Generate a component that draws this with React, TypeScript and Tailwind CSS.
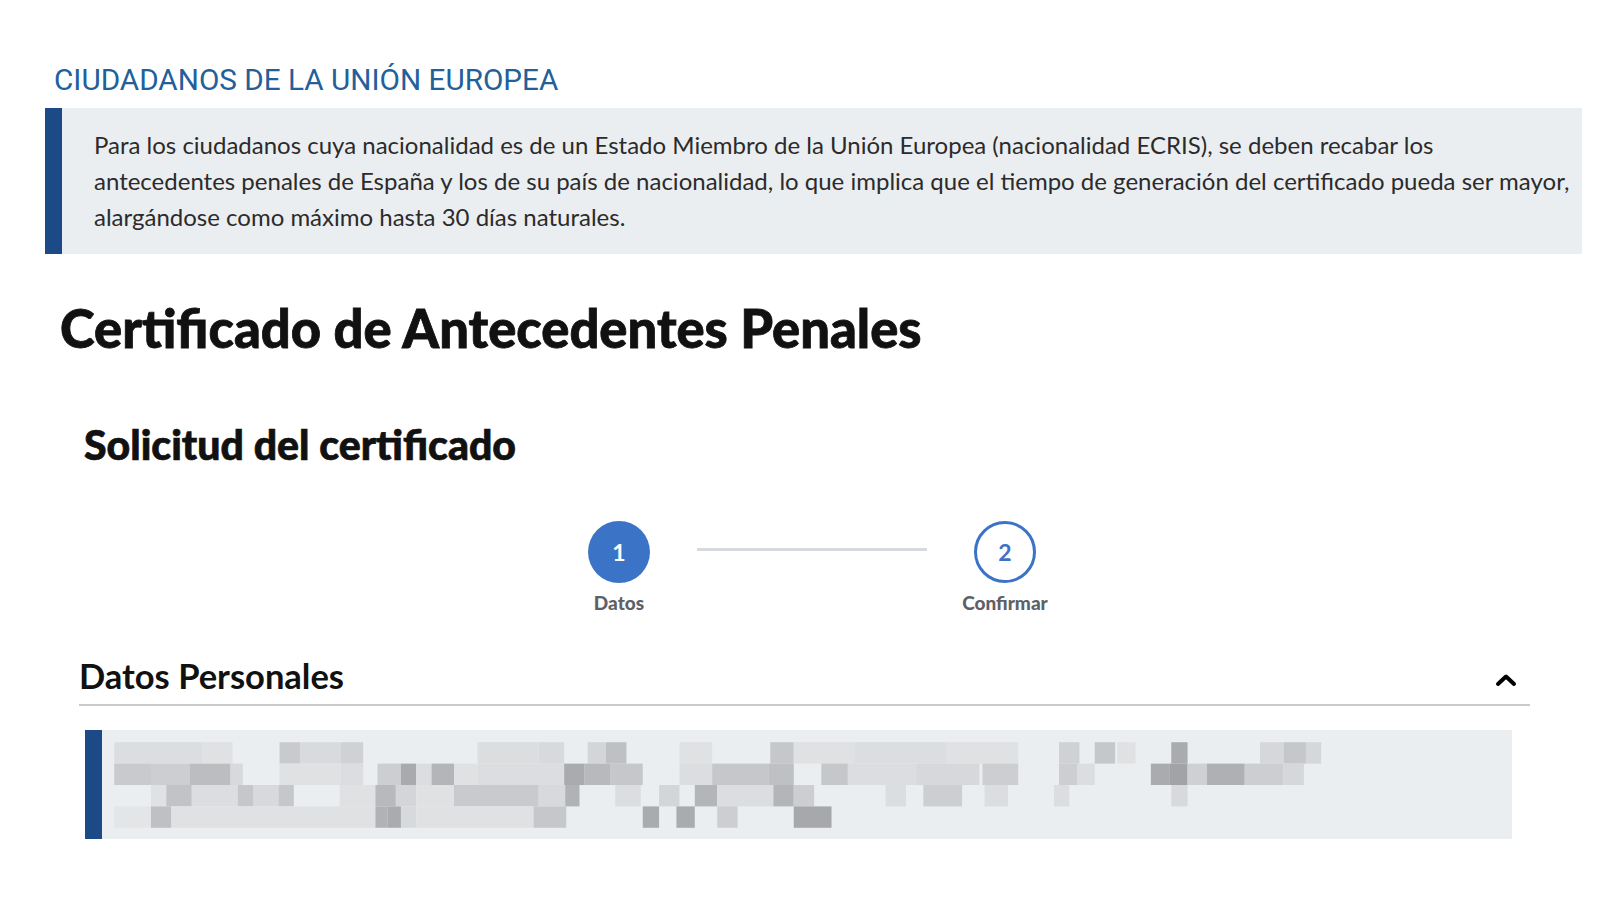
import React from "react";

// x, y, w, h, colour
type Cell = [number, number, number, number, string];

const bands = [
    [727, 748],
    [748, 769],
    [769, 790],
    [790, 811],
];

const rows: [number, number, string][][] = [
    [
        [114, 200, "#dcdde0"], [200, 230, "#e0e1e3"], [276, 296, "#c9cacd"], [296, 336, "#d9dadd"],
        [336, 358, "#d0d1d4"], [470, 530, "#dcdddf"], [530, 555, "#d8d9dc"], [578, 596, "#d4d5d8"],
        [596, 616, "#bfc0c3"], [668, 700, "#e0e1e3"], [757, 780, "#c6c7ca"], [780, 840, "#e0e1e3"],
        [840, 930, "#dcdde0"], [930, 1000, "#e0e1e3"], [1040, 1060, "#d0d1d4"], [1075, 1095, "#c6c7ca"],
        [1097, 1115, "#e0e1e3"], [1150, 1166, "#a9abae"], [1237, 1260, "#d6d7da"], [1260, 1282, "#c6c7ca"],
        [1282, 1297, "#d6d7da"],
    ],
    [
        [114, 150, "#c9cacd"], [150, 188, "#cdced1"], [188, 228, "#bcbdc0"], [228, 240, "#d8d9dc"],
        [276, 336, "#e0e1e3"], [336, 358, "#dcdde0"], [372, 395, "#cdced1"], [395, 410, "#a8aaad"],
        [410, 425, "#dcdde0"], [425, 447, "#b4b5b8"], [447, 470, "#e0e1e3"], [470, 555, "#dcdde0"],
        [555, 575, "#a9abae"], [575, 600, "#b8b9bc"], [600, 632, "#c6c7ca"], [668, 700, "#dcdde0"],
        [700, 755, "#c6c7ca"], [755, 780, "#bfc0c3"], [807, 833, "#c6c7ca"], [833, 900, "#dcdde0"],
        [900, 962, "#d7d8db"], [965, 1000, "#cdced1"], [1040, 1058, "#cdced1"], [1058, 1075, "#dcdde0"],
        [1130, 1148, "#a9abae"], [1148, 1166, "#a1a3a6"], [1166, 1185, "#cfd0d3"], [1185, 1222, "#aeb0b3"],
        [1222, 1260, "#cdced1"], [1260, 1280, "#d6d7da"],
    ],
    [
        [150, 165, "#e0e1e3"], [165, 190, "#c2c3c6"], [190, 235, "#dcdde0"], [235, 250, "#c6c7ca"],
        [250, 275, "#d8d9dc"], [275, 290, "#c6c7ca"], [335, 370, "#e0e1e3"], [370, 390, "#b8b9bc"],
        [390, 410, "#d4d5d8"], [410, 447, "#e0e1e3"], [447, 530, "#c9cacd"], [530, 556, "#d8d9dc"],
        [556, 570, "#b0b2b5"], [605, 630, "#dcdde0"], [648, 668, "#d4d5d8"], [683, 705, "#b4b5b8"],
        [705, 760, "#dcdde0"], [760, 780, "#b4b5b8"], [780, 800, "#cdced1"], [870, 890, "#dcdde0"],
        [907, 945, "#cdced1"], [967, 990, "#dcdde0"], [1035, 1050, "#dcdde0"], [1150, 1166, "#d8d9dc"],
    ],
    [
        [114, 150, "#e4e5e7"], [150, 170, "#bfc0c3"], [170, 370, "#e0e1e3"], [370, 382, "#b0b2b5"],
        [382, 395, "#a9abae"], [395, 410, "#d8d9dc"], [410, 525, "#e0e1e3"], [525, 557, "#c6c7ca"],
        [632, 648, "#a9abae"], [665, 683, "#a9abae"], [705, 725, "#cdced1"], [780, 817, "#a6a8ab"],
    ],
];

const cells: Cell[] = rows.flatMap((row, i) =>
    row.map(([x1, x2, c]) => [x1 - 102, bands[i][0] - 715, x2 - x1, bands[i][1] - bands[i][0], c] as Cell)
);

// Bloque pixelado (datos ocultos)
const Mosaic = () => (
    <svg width="1408" height="109" viewBox="0 0 1380 107" preserveAspectRatio="none" className="block">
        {cells.map(([x, y, w, h, c], i) => (
            <rect key={i} x={x} y={y} width={w} height={h} fill={c} />
        ))}
    </svg>
);

const Step = ({ n, label, active }: { n: number; label: string; active?: boolean }) => (
    <div className="flex w-[156px] flex-col items-center">
        <div
            className={
                active
                    ? "flex h-[62px] w-[62px] items-center justify-center rounded-full bg-[#3b74c6] text-[23px] font-bold text-white"
                    : "flex h-[62px] w-[62px] items-center justify-center rounded-full border-[3px] border-[#3b74c6] bg-white text-[23px] font-bold text-[#3b74c6]"
            }
        >
            {n}
        </div>
        <span className="mt-[8px] text-[19px] font-black leading-[24px] text-[#5d6167]">{label}</span>
    </div>
);

export default function App() {
    return (
        <div className="min-h-[901px] w-[1600px] bg-white font-['Lato','Noto_Sans',sans-serif] text-[#222]">
            {/* Aviso UE */}
            <div className="pt-[62px] pl-[45px] pr-[18px]">
                <h3 className="pl-[9px] font-['Roboto',sans-serif] text-[29.7px] leading-[35px] text-[#23609a]">
                    CIUDADANOS DE LA UNIÓN EUROPEA
                </h3>
                <div className="mt-[11px] flex bg-[#ebeef1]">
                    <div className="w-[17px] shrink-0 bg-[#1b4a86]" />
                    <p className="py-[19px] pl-[32px] pr-[10px] text-[24px] leading-[36px] text-[#2b2b2b]">
                        Para los ciudadanos cuya nacionalidad es de un Estado Miembro de la Unión Europea (nacionalidad ECRIS), se deben recabar los antecedentes penales de España y los de su país de nacionalidad, lo que implica que el tiempo de generación del certificado pueda ser mayor, alargándose como máximo hasta 30 días naturales.
                    </p>
                </div>
            </div>

            <h1 className="mt-[43px] pl-[60px] text-[52.5px] font-black leading-[62px] text-[#111] [-webkit-text-stroke:0.8px_#111]">
                Certificado de Antecedentes Penales
            </h1>

            <h2 className="mt-[62px] pl-[84px] text-[41px] font-black leading-[48px] text-[#111] [-webkit-text-stroke:0.7px_#111]">
                Solicitud del certificado
            </h2>

            {/* Pasos */}
            <div className="mt-[52px] flex justify-center pl-[24px]">
                <Step n={1} label="Datos" active />
                <div className="mt-[27px] h-[3px] w-[230px] bg-[#d6d9dd]" />
                <Step n={2} label="Confirmar" />
            </div>

            {/* Datos personales */}
            <div className="mt-[40px] pl-[79px] pr-[70px]">
                <div className="flex items-center justify-between border-b-2 border-[#c8cacd] pb-[7px]">
                    <h3 className="text-[34.5px] font-bold leading-[42px] text-[#111]">Datos Personales</h3>
                    <svg width="22" height="14" viewBox="0 0 22 14" className="mr-[13px] mt-[8px]">
                        <path d="M3 11 L11 3.5 L19 11" fill="none" stroke="#000" strokeWidth="4" strokeLinecap="round" strokeLinejoin="round" />
                    </svg>
                </div>
                <div className="mt-[24px] ml-[6px] mr-[18px] flex bg-[#ebeef1]">
                    <div className="w-[17px] shrink-0 bg-[#1b4a86]" />
                    <Mosaic />
                </div>
            </div>
        </div>
    );
}
